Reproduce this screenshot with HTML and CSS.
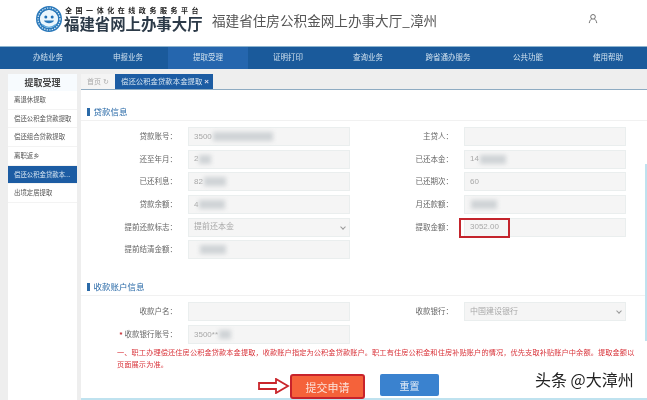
FILE: index.html
```html
<!DOCTYPE html>
<html lang="zh-CN">
<head>
<meta charset="utf-8">
<title>福建省住房公积金网上办事大厅_漳州</title>
<link rel="stylesheet" href="styles.css">
</head>
<body>
<div class="page">
  <header class="header">
    <div class="brand">
      <svg class="logo" viewBox="0 0 26 26" width="26" height="26" aria-hidden="true">
        <circle cx="13" cy="13" r="11" fill="none" stroke="#2a78ba" stroke-width="4"/>
        <circle cx="13" cy="13" r="11" fill="none" stroke="#d8ecf8" stroke-width="1.2" stroke-dasharray="1.4 1.2"/>
        <circle cx="13" cy="13" r="8.6" fill="#eaf5fc"/>
        <circle cx="9.8" cy="11" r="1.5" fill="#1f6fb5"/>
        <circle cx="16.2" cy="11" r="1.5" fill="#1f6fb5"/>
        <path d="M8 14.5c1.4 3.6 8.6 3.6 10 0z" fill="#2a78ba"/>
        <path d="M6 18.5c4.4 3.6 9.6 3.6 14 0" fill="none" stroke="#58a6dc" stroke-width="1.4"/>
      </svg>
      <div class="brand-text">
        <div class="brand-sub">全国一体化在线政务服务平台</div>
        <div class="brand-main">福建省网上办事大厅</div>
      </div>
    </div>
    <h1 class="site-title">福建省住房公积金网上办事大厅_漳州</h1>
    <svg class="user" viewBox="0 0 12 12" width="10" height="11" aria-hidden="true">
      <circle cx="6" cy="4" r="2.8" fill="none" stroke="#555" stroke-width="1"/>
      <path d="M1.5 11.5c.4-3 2-4.6 2.8-4.9M10.5 11.5c-.4-3-2-4.6-2.8-4.9" fill="none" stroke="#555" stroke-width="1"/>
    </svg>
  </header>
  <nav class="nav">
    <a class="nav-item">办结业务</a>
    <a class="nav-item">申报业务</a>
    <a class="nav-item active">提取受理</a>
    <a class="nav-item">证明打印</a>
    <a class="nav-item">查询业务</a>
    <a class="nav-item">跨省通办服务</a>
    <a class="nav-item">公共功能</a>
    <a class="nav-item">使用帮助</a>
  </nav>
  <div class="body">
    <aside class="side">
      <div class="side-title">提取受理</div>
      <a class="side-item">离退休提取</a>
      <a class="side-item">偿还公积金贷款提取</a>
      <a class="side-item">偿还组合贷款提取</a>
      <a class="side-item">离职返乡</a>
      <a class="side-item current">偿还公积金贷款本...</a>
      <a class="side-item">出境定居提取</a>
    </aside>
    <main class="main">
      <div class="tabs">
        <span class="tab-home">首页 <span class="refresh">↻</span></span>
        <span class="tab-on">偿还公积金贷款本金提取 <b class="close">×</b></span>
      </div>
      <div class="content">
        <h2 class="section">贷款信息</h2>
        <div class="form">
          <label class="label">贷款账号：</label><div class="field"><span>3500</span><i class="smear w70"></i></div>
          <label class="label">主贷人：</label><div class="field"></div>
          <label class="label">还至年月：</label><div class="field"><span>2</span><i class="smear w10"></i></div>
          <label class="label">已还本金：</label><div class="field"><span>14</span><i class="smear w25"></i></div>
          <label class="label">已还利息：</label><div class="field"><span>82</span><i class="smear w20"></i></div>
          <label class="label">已还期次：</label><div class="field"><span>60</span></div>
          <label class="label">贷款余额：</label><div class="field"><span>4</span><i class="smear w25"></i></div>
          <label class="label">月还款额：</label><div class="field"><i class="smear w25"></i></div>
          <label class="label">提前还款标志：</label><div class="field select"><span>提前还本金</span></div>
          <label class="label">提取金额：</label><div class="field hl"><span>3052.00</span><i class="mark"></i></div>
          <label class="label">提前结清金额：</label><div class="field"><i class="smear w25 lead"></i></div>
          <span class="blank"></span>
        </div>
        <h2 class="section second">收款账户信息</h2>
        <div class="form">
          <label class="label">收款户名：</label><div class="field"></div>
          <label class="label">收款银行：</label><div class="field select"><span>中国建设银行</span></div>
          <label class="label"><em class="req">*</em> 收款银行账号：</label><div class="field"><span>3500**</span><i class="smear w10"></i></div>
          <span class="blank"></span>
        </div>
        <p class="note">一、职工办理偿还住房公积金贷款本金提取，收款账户指定为公积金贷款账户。职工有住房公积金和住房补贴账户的情况，优先支取补贴账户中余额。提取金额以页面展示为准。</p>
        <div class="actions">
          <svg class="arrow" viewBox="0 0 32 16" width="32" height="16" aria-hidden="true">
            <path d="M1 5h17V1l12 7-12 7v-4H1z" fill="#fff" stroke="#c9252b" stroke-width="1.8"/>
          </svg>
          <button class="btn submit">提交申请</button>
          <button class="btn reset">重置</button>
        </div>
      </div>
    </main>
  </div>
  <div class="watermark">头条 @大漳州</div>
</div>
</body>
</html>
```
FILE: styles.css
```css
* { box-sizing: border-box; }
html, body { margin: 0; padding: 0; }
body {
  width: 647px; height: 400px; overflow: hidden; background: #fff;
  font-family: "Liberation Sans", "Noto Sans CJK SC", sans-serif;
}
.page { position: relative; width: 647px; height: 400px; overflow: hidden; background: #eeeeee; filter: blur(0.35px); }
.header { height: 46px; background: #fff; display: flex; align-items: center; padding: 0 0 0 36px; position: relative; }
.brand { display: flex; align-items: center; margin-top: -8px; }
.logo { flex: none; }
.brand-text { margin-left: 2px; width: 140px; }
.brand-sub { font-size: 7px; line-height: 8px; font-weight: 700; color: #222; letter-spacing: 3.55px; white-space: nowrap; padding-left: 1px; }
.brand-main { font-family: "Noto Sans CJK SC", sans-serif; font-size: 15.4px; line-height: 17px; font-weight: 700; color: #2c3a48; white-space: nowrap; }
.site-title { margin: -7px 0 0 8px; font-size: 13.6px; font-weight: 400; color: #555; white-space: nowrap; font-family: "Noto Sans CJK SC", sans-serif; }
.user { position: absolute; left: 588px; top: 13px; }
.nav { height: 23px; display: flex; background: #1a5a9b; border-top: 1px solid #8db4cf; padding-left: 8px; }
.nav-item { width: 80px; flex: none; text-align: center; font-size: 7.5px; line-height: 22px; color: #cfe0ee; }
.nav-item.active { background: #2566ae; }
.body { display: flex; height: 331px; padding: 5px 0 0 8px; }
.side { width: 69px; flex: none; background: #fff; }
.side-title { height: 17px; font-size: 9px; line-height: 18px; font-weight: 700; color: #444; text-align: center; background: #f7fbfe; }
.side-item { display: block; height: 18.7px; padding-left: 6px; font-size: 6.4px; line-height: 18.7px; color: #555; white-space: nowrap; overflow: hidden; border-bottom: 1px solid #f3f3f3; }
.side-item.current { background: #1c5ca3; color: #d7e6f3; }
.main { width: 566px; margin-left: 4px; flex: none; }
.tabs { height: 16px; display: flex; background: #eeeeee; border-bottom: 1px solid #8eabc2; }
.tab-home { width: 34px; font-size: 7px; line-height: 15px; color: #aaa; background: #f4f4f4; padding-left: 6px; }
.refresh { font-size: 7px; }
.tab-on { width: 98px; font-size: 7.4px; line-height: 15px; color: #d5e4f1; background: #1c5ca3; padding-left: 6px; white-space: nowrap; }
.close { color: #dde; font-size: 8px; }
.content { background: #fff; height: 310px; padding-top: 16px; position: relative; }
.content::before { content: ""; position: absolute; left: 0; right: 0; bottom: 0; height: 2px; background: #bfe2ef; }
.content::after { content: ""; position: absolute; right: 0; top: 74px; width: 2px; height: 177px; background: #bfe2ef; }
.section { margin: 0 0 6px; height: 15px; padding-left: 6px; font-size: 8.5px; line-height: 12px; font-weight: 400; color: #2a6aa8; border-bottom: 1px solid #f1f1f1; display: flex; }
.section::before { content: ""; width: 2.5px; height: 8px; margin: 2px 4px 0 0; background: #2a6aa8; flex: none; }
.section.second { margin-top: 22px; }
.form { display: grid; grid-template-columns: 92px 162px 114px 162px; row-gap: 3.7px; padding-left: 15px; }
.label { height: 19px; font-size: 7.5px; line-height: 19px; color: #666; text-align: right; padding-right: 12px; white-space: nowrap; margin-right: -1px; }
.field { height: 19px; background: #f5f5f5; border: 1px solid #eaeeee; font-size: 8px; line-height: 18px; color: #a8a8a8; padding-left: 5px; display: flex; align-items: center; position: relative; }
.select::after { content: ""; position: absolute; right: 4px; top: 6px; width: 3px; height: 3px; border-right: 1px solid #999; border-bottom: 1px solid #999; transform: rotate(45deg); }
.smear { display: block; height: 9px; background: #cfd3d6; filter: blur(2px); margin-left: 1px; }
.lead { margin-left: 6px; }
.w10 { width: 12px; }
.w20 { width: 22px; }
.w25 { width: 26px; }
.w70 { width: 60px; }
.mark { position: absolute; left: -6px; top: -1px; width: 51px; height: 20px; border: 2px solid #c4242c; }
.req { color: #c4242c; font-style: normal; font-weight: 700; }
.blank { display: block; }
.note { margin: 3px 0 0 36px; width: 519px; font-size: 7.2px; letter-spacing: 0.1px; line-height: 12px; color: #d9333a; }
.actions { display: flex; align-items: flex-start; margin: 3px 0 0 177px; position: relative; z-index: 1; }
.arrow { flex: none; margin: 4px 0 0 0; }
.btn { border: 0; font-family: inherit; padding: 0; }
.submit { width: 75px; height: 25px; background: #f5623a; color: #fbe3da; font-size: 11px; border: 2px solid #c8232b; border-radius: 3px; }
.reset { width: 59px; height: 22px; margin-left: 15px; background: #3a82cf; color: #dfeaf6; font-size: 10px; border-radius: 2px; }
.watermark { position: absolute; left: 535px; top: 369px; font-size: 16px; line-height: 20px; color: #222; white-space: nowrap; font-family: "Noto Sans CJK SC", sans-serif; text-shadow: 0 0 1px #fff, 0 0 2px #fff; }
```
